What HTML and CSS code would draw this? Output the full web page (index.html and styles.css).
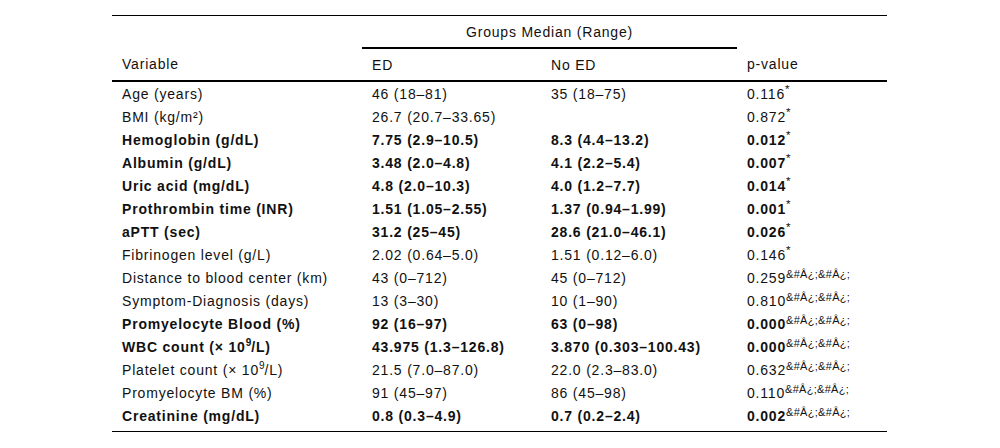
FILE: index.html
```html
<!DOCTYPE html>
<html lang="en">
<head>
<meta charset="utf-8">
<title>Groups Median (Range)</title>
<link rel="stylesheet" href="styles.css">
</head>
<body>
<table class="data-table">
  <colgroup>
    <col class="col-var">
    <col class="col-ed">
    <col class="col-noed">
    <col class="col-p">
  </colgroup>
  <thead>
    <tr class="head-group">
      <th rowspan="2" class="head-side">Variable</th>
      <th colspan="2" class="group-cell">Groups Median (Range)</th>
      <th rowspan="2" class="head-side">p-value</th>
    </tr>
    <tr class="head-sub">
      <th>ED</th>
      <th>No ED</th>
    </tr>
  </thead>
  <tbody>
    <tr><td>Age (years)</td><td>46 (18–81)</td><td>35 (18–75)</td><td>0.116<sup>*</sup></td></tr>
    <tr><td>BMI (kg/m²)</td><td>26.7 (20.7–33.65)</td><td></td><td>0.872<sup>*</sup></td></tr>
    <tr class="sig"><td>Hemoglobin (g/dL)</td><td>7.75 (2.9–10.5)</td><td>8.3 (4.4–13.2)</td><td>0.012<sup>*</sup></td></tr>
    <tr class="sig"><td>Albumin (g/dL)</td><td>3.48 (2.0–4.8)</td><td>4.1 (2.2–5.4)</td><td>0.007<sup>*</sup></td></tr>
    <tr class="sig"><td>Uric acid (mg/dL)</td><td>4.8 (2.0–10.3)</td><td>4.0 (1.2–7.7)</td><td>0.014<sup>*</sup></td></tr>
    <tr class="sig"><td>Prothrombin time (INR)</td><td>1.51 (1.05–2.55)</td><td>1.37 (0.94–1.99)</td><td>0.001<sup>*</sup></td></tr>
    <tr class="sig"><td>aPTT (sec)</td><td>31.2 (25–45)</td><td>28.6 (21.0–46.1)</td><td>0.026<sup>*</sup></td></tr>
    <tr><td>Fibrinogen level (g/L)</td><td>2.02 (0.64–5.0)</td><td>1.51 (0.12–6.0)</td><td>0.146<sup>*</sup></td></tr>
    <tr><td>Distance to blood center (km)</td><td>43 (0–712)</td><td>45 (0–712)</td><td>0.259<sup class="mark">&amp;#Â¿;&amp;#Â¿;</sup></td></tr>
    <tr><td>Symptom-Diagnosis (days)</td><td>13 (3–30)</td><td>10 (1–90)</td><td>0.810<sup class="mark">&amp;#Â¿;&amp;#Â¿;</sup></td></tr>
    <tr class="sig"><td>Promyelocyte Blood (%)</td><td>92 (16–97)</td><td>63 (0–98)</td><td>0.000<sup class="mark">&amp;#Â¿;&amp;#Â¿;</sup></td></tr>
    <tr class="sig"><td>WBC count (× 10<sup class="exp">9</sup>/L)</td><td>43.975 (1.3–126.8)</td><td>3.870 (0.303–100.43)</td><td>0.000<sup class="mark">&amp;#Â¿;&amp;#Â¿;</sup></td></tr>
    <tr><td>Platelet count (× 10<sup class="exp">9</sup>/L)</td><td>21.5 (7.0–87.0)</td><td>22.0 (2.3–83.0)</td><td>0.632<sup class="mark">&amp;#Â¿;&amp;#Â¿;</sup></td></tr>
    <tr><td>Promyelocyte BM (%)</td><td>91 (45–97)</td><td>86 (45–98)</td><td>0.110<sup class="mark">&amp;#Â¿;&amp;#Â¿;</sup></td></tr>
    <tr class="sig last"><td>Creatinine (mg/dL)</td><td>0.8 (0.3–4.9)</td><td>0.7 (0.2–2.4)</td><td>0.002<sup class="mark">&amp;#Â¿;&amp;#Â¿;</sup></td></tr>
  </tbody>
</table>
</body>
</html>
```

FILE: styles.css
```css
html, body {
  margin: 0;
  padding: 0;
  background: #fff;
}

body {
  padding: 15px 0 0 112px;
}

.data-table {
  border-collapse: separate;
  border-spacing: 0;
  width: 775px;
  table-layout: fixed;
  font-family: "Liberation Sans", Arial, sans-serif;
  font-size: 14px;
  letter-spacing: 0.8px;
  color: #111;
  border-top: 1px solid #000;
  border-bottom: 1px solid #000;
}

.col-var { width: 250px; }
.col-ed { width: 179px; }
.col-noed { width: 196px; }
.col-p { width: 150px; }

.data-table th {
  font-weight: normal;
  text-align: left;
  padding: 0 10px;
}

.head-group th {
  height: 31px;
  vertical-align: middle;
}

.head-group .group-cell {
  text-align: center;
  padding: 0;
  border-bottom: 2px solid #000;
  height: 31px;
}

.head-group .head-side {
  vertical-align: bottom;
  padding-bottom: 8px;
  border-bottom: 2px solid #000;
}

.head-sub th {
  height: 31px;
  border-bottom: 2px solid #000;
  vertical-align: middle;
}

.data-table td {
  height: 23px;
  padding: 0 10px;
  line-height: 16px;
  vertical-align: middle;
  white-space: nowrap;
}

.data-table tr.last td {
  height: 24px;
  padding-top: 0;
  padding-bottom: 3px;
}

.sig td {
  font-weight: bold;
}

sup {
  font-weight: normal;
  line-height: 0;
  letter-spacing: 0;
}

sup.mark {
  font-size: 11px;
  vertical-align: 5px;
  letter-spacing: 0.3px;
}

sup.exp {
  font-size: 10px;
  font-weight: inherit;
  vertical-align: 6px;
}
```
